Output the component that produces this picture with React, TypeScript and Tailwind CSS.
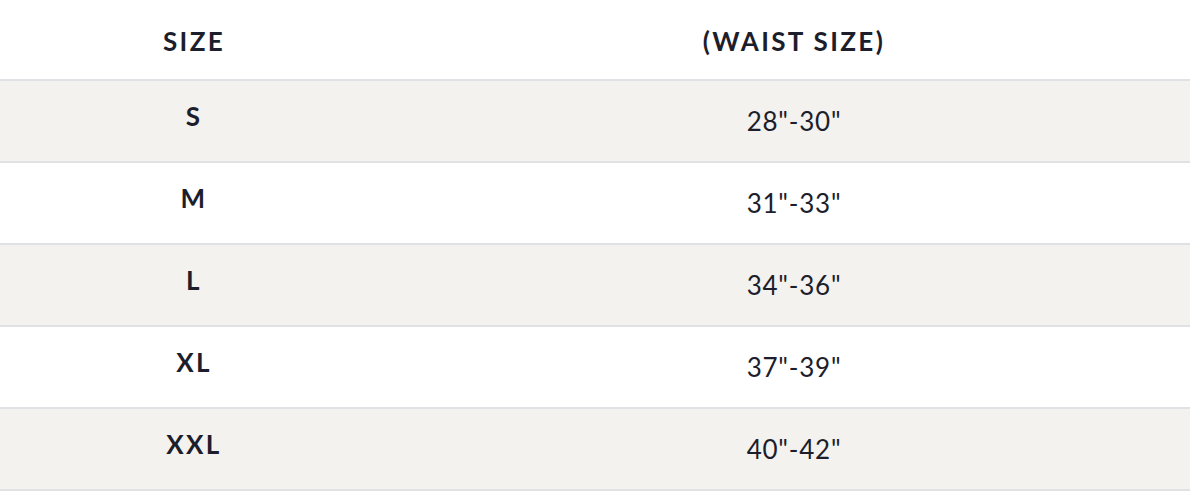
const rows = [
  { size: "S", waist: '28"-30"' },
  { size: "M", waist: '31"-33"' },
  { size: "L", waist: '34"-36"' },
  { size: "XL", waist: '37"-39"' },
  { size: "XXL", waist: '40"-42"' },
];

export default function App() {
  return (
    <div className="w-[1190px] bg-white text-[#1d1e2b] font-['Lato','Liberation_Sans',sans-serif]">
      {/* Header */}
      <div className="grid grid-cols-[388px_1fr] h-[81px] border-b-2 border-[#dfe1e5]">
        <div className="flex items-center justify-center pt-[4px] text-[26px] font-bold tracking-[0.09em]">
          SIZE
        </div>
        <div className="flex items-center justify-center pl-[10px] pt-[4px] text-[26px] font-bold tracking-[0.09em]">
          (WAIST SIZE)
        </div>
      </div>

      {/* Rows */}
      {rows.map((row, i) => (
        <div
          key={row.size}
          className={
            "grid grid-cols-[388px_1fr] h-[82px] border-b-2 border-[#dfe1e5] " +
            (i % 2 === 0 ? "bg-[#f3f2ef]" : "bg-white")
          }
        >
          <div className="flex items-center justify-center pb-[10px] text-[26px] font-bold tracking-[0.09em]">
            {row.size}
          </div>
          <div className="flex items-center justify-center pl-[10px] text-[26px] tracking-[0.03em]">
            {row.waist}
          </div>
        </div>
      ))}
    </div>
  );
}
